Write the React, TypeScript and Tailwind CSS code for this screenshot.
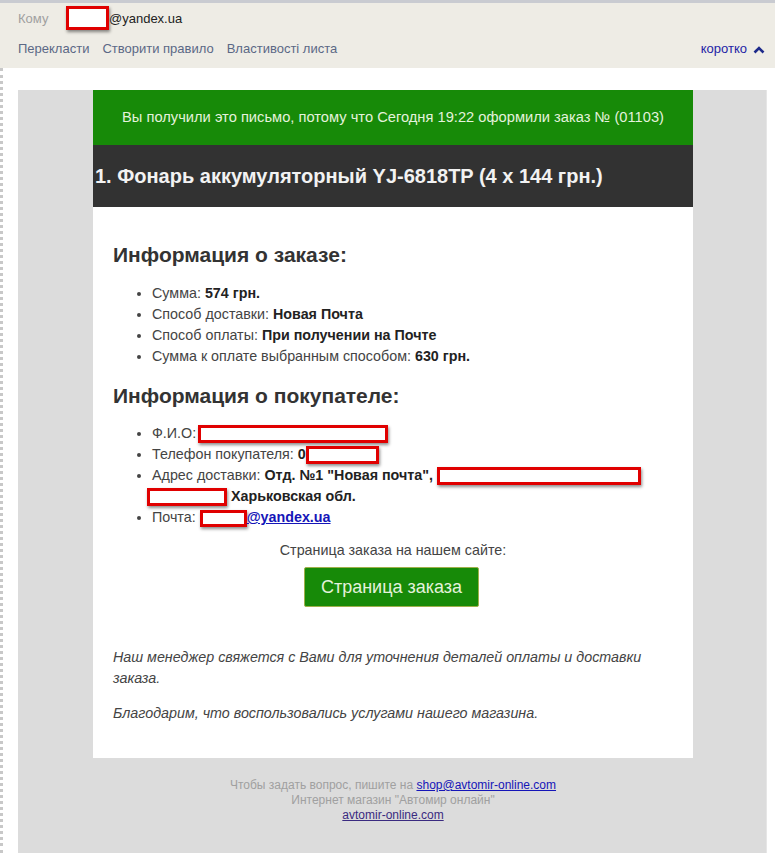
import React from "react";

function Redact({ w, h = 17, className = "" }: { w: number; h?: number; className?: string }) {
  return (
    <span
      className={`inline-block align-middle border-[3px] border-[#e00000] bg-white shadow-[1px_2px_3px_rgba(0,0,0,0.45)] ${className}`}
      style={{ width: w, height: h }}
    />
  );
}

export default function App() {
  return (
    <div className="w-[775px] h-[853px] overflow-hidden bg-white font-['Liberation_Sans',Arial,sans-serif]">
      {/* mail header */}
      <div className="h-[68px] bg-[#eeece5] border-t-[3px] border-[#c9cbd1] relative">
        <div className="flex items-center h-[29px] pl-[18px] pt-[3px] text-[13px]">
          <span className="text-[#a0a0a0] w-[48px]">Кому</span>
          <Redact w={43} h={24} className="-mt-[2px]" />
          <span className="text-[#222]">@yandex.ua</span>
        </div>
        <div className="flex items-center h-[30px] mt-[2px] pl-[18px] pr-[10px] text-[13px]">
          <span className="text-[#5b6886] mr-[13px]">Перекласти</span>
          <span className="text-[#5b6886] mr-[13px]">Створити правило</span>
          <span className="text-[#5b6886]">Властивості листа</span>
          <span className="ml-auto text-[#2323a5] flex items-center gap-[6px]">
            коротко
            <svg width="12" height="9" viewBox="0 0 12 9">
              <path d="M1.5 7.5 L6 3 L10.5 7.5" fill="none" stroke="#1d2a8a" strokeWidth="2.6" />
            </svg>
          </span>
        </div>
      </div>

      <div className="h-[785px] border-l-[3px] border-dotted border-[#c8c8c8] pt-[22px] pl-[15px] pr-[8px]">
        <div className="bg-[#dcdcdc] h-full border-r border-[#e6e6e6]">
          <div className="w-[600px] ml-[75px]">
            <div className="h-[55px] bg-[#178a08] flex items-center justify-center text-[#e4f2dc] text-[14.7px] font-['Liberation_Sans_Narrow','Liberation_Sans',Arial,sans-serif]">
              Вы получили это письмо, потому что Сегодня 19:22 оформили заказ № (01103)
            </div>
            <div className="h-[62px] bg-[#323232] flex items-center pl-[2px] text-[#f2f2f2] text-[20px] font-bold font-['Liberation_Sans_Narrow','Liberation_Sans',Arial,sans-serif]">
              1. Фонарь аккумуляторный YJ-6818TP (4 x 144 грн.)
            </div>
            <div className="bg-white pt-[35px] pb-[34px] px-[20px] text-[#333] text-[14.3px]">
              <h2 className="text-[21px] leading-[25px] font-bold text-[#333]">Информация о заказе:</h2>
              <ul className="list-disc pl-[39px] mt-[16px] leading-[21px] text-[#444]">
                <li>Сумма: <b className="text-[#222]">574 грн.</b></li>
                <li>Способ доставки: <b className="text-[#222]">Новая Почта</b></li>
                <li>Способ оплаты: <b className="text-[#222]">При получении на Почте</b></li>
                <li>Сумма к оплате выбранным способом: <b className="text-[#222]">630 грн.</b></li>
              </ul>
              <h2 className="text-[21px] leading-[25px] font-bold text-[#333] mt-[16px]">Информация о покупателе:</h2>
              <ul className="list-disc pl-[39px] mt-[15px] leading-[21px] text-[#444]">
                <li>Ф.И.О: <Redact w={190} h={18} className="-ml-[2px]" /></li>
                <li>Телефон покупателя: <b className="text-[#222]">0</b><Redact w={73} h={18} /></li>
                <li>
                  Адрес доставки: <b className="text-[#222]">Отд. №1 "Новая почта", </b>
                  <Redact w={204} h={18} /> <Redact w={80} h={18} className="-ml-[5px]" />{" "}
                  <b className="text-[#222]">Харьковская обл.</b>
                </li>
                <li>
                  Почта: <Redact w={47} h={17} />
                  <a className="text-[#1515b8] underline font-bold">@yandex.ua</a>
                </li>
              </ul>
              <p className="text-center leading-[21px] mt-[12px] text-[#444]">Страница заказа на нашем сайте:</p>
              <div className="flex justify-center mt-[6px]">
                <div className="w-[175px] h-[40px] ml-[-3px] bg-[#178a08] border border-[#9fb04a] rounded-[2px] flex items-center justify-center text-[18px] text-[#e4f2dc]">
                  Страница заказа
                </div>
              </div>
              <p className="italic leading-[21px] mt-[40px] text-[#444]">
                Наш менеджер свяжется с Вами для уточнения деталей оплаты и доставки заказа.
              </p>
              <p className="italic leading-[21px] mt-[14px] text-[#444]">
                Благодарим, что воспользовались услугами нашего магазина.
              </p>
            </div>
            <div className="pt-[20px] text-center text-[12px] leading-[15px] text-[#a0a0a0]">
              <div>
                Чтобы задать вопрос, пишите на <a className="text-[#1515b8] underline">shop@avtomir-online.com</a>
              </div>
              <div>Интернет магазин "Автомир онлайн"</div>
              <div>
                <a className="text-[#3a2a80] underline">avtomir-online.com</a>
              </div>
            </div>
          </div>
        </div>
      </div>
    </div>
  );
}
